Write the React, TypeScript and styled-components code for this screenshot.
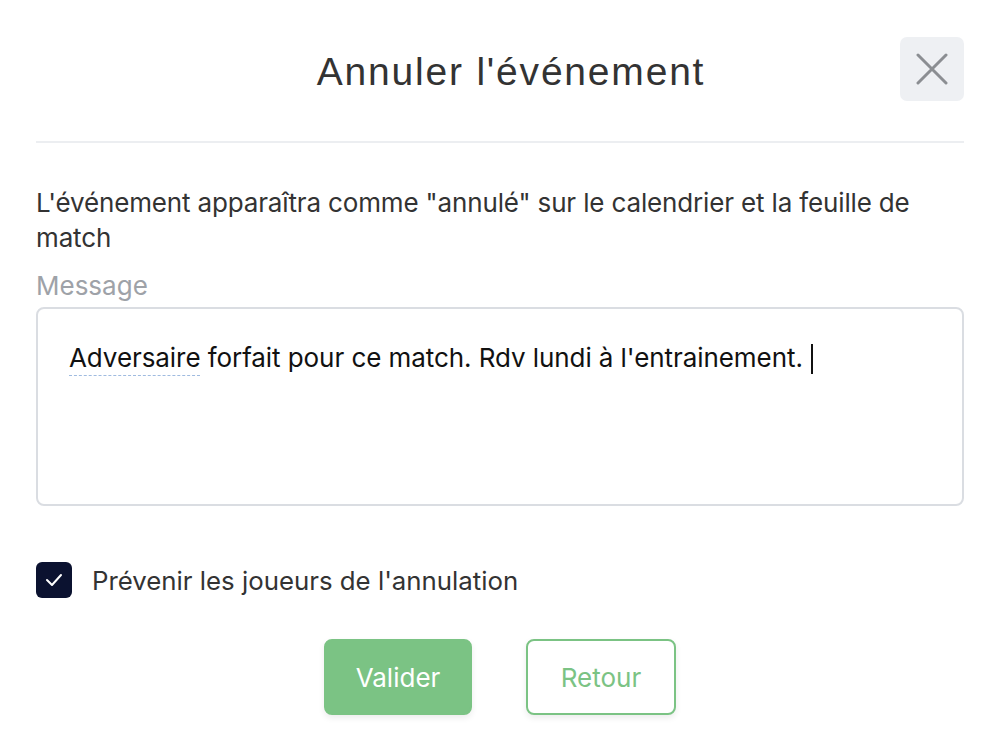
import React from 'react';
import styled, { createGlobalStyle } from 'styled-components';

const GlobalStyle = createGlobalStyle`
  html, body {
    margin: 0;
    padding: 0;
    background: #fff;
  }
  body {
    font-family: 'Inter', 'Liberation Sans', sans-serif;
  }
`;

const Modal = styled.div`
  width: 996px;
  height: 748px;
  box-sizing: border-box;
  padding: 37px 32px 0 36px;
  display: flex;
  flex-direction: column;
`;

const Header = styled.div`
  display: flex;
  align-items: center;
  justify-content: center;
  position: relative;
  height: 64px;
  padding-bottom: 40px;
  border-bottom: 2px solid #eceef1;
`;

const Title = styled.h1`
  margin: 6px 0 0 22px;
  font-family: 'Liberation Sans', Arial, sans-serif;
  font-weight: 400;
  font-size: 39px;
  color: #333;
  letter-spacing: 1.8px;
`;

const CloseButton = styled.button`
  position: absolute;
  right: 0;
  top: 0;
  width: 64px;
  height: 64px;
  border: none;
  border-radius: 7px;
  background: #eef0f3;
  display: flex;
  align-items: center;
  justify-content: center;
  padding: 0;
  cursor: pointer;
`;

const Body = styled.div`
  display: flex;
  flex-direction: column;
  padding-top: 42px;
`;

const Description = styled.p`
  margin: 0;
  font-size: 26px;
  letter-spacing: -0.15px;
  line-height: 35px;
  color: #333;
`;

const Label = styled.label`
  margin-top: 16px;
  font-size: 26px;
  line-height: 30px;
  color: #9ea2a8;
`;

const TextBox = styled.div`
  margin-top: 6px;
  height: 199px;
  box-sizing: border-box;
  border: 2px solid #dadde2;
  border-radius: 8px;
  padding: 32px 31px;
  font-size: 26px;
  letter-spacing: -0.07px;
  line-height: 34px;
  color: #111;
`;

const Spell = styled.span`
  text-decoration: underline dashed #9fbbe0;
  text-decoration-thickness: 1px;
  text-underline-offset: 8px;
`;

const Caret = styled.span`
  display: inline-block;
  width: 2px;
  height: 30px;
  background: #111;
  vertical-align: -7px;
  margin-left: 8px;
`;

const CheckRow = styled.div`
  margin-top: 56px;
  display: flex;
  align-items: center;
  gap: 20px;
`;

const CheckBox = styled.span`
  width: 36px;
  height: 36px;
  border-radius: 6px;
  background: #0b1230;
  display: flex;
  align-items: center;
  justify-content: center;
`;

const CheckLabel = styled.span`
  font-size: 25.8px;
  color: #333;
`;

const Actions = styled.div`
  margin-top: 41px;
  display: flex;
  justify-content: center;
  gap: 54px;
`;

const Button = styled.button<{ $outline?: boolean }>`
  height: 76px;
  width: ${p => (p.$outline ? '150px' : '148px')};
  border-radius: 8px;
  font-family: 'Inter', 'Liberation Sans', sans-serif;
  font-size: 26px;
  cursor: pointer;
  box-sizing: border-box;
  border: 2px solid #7bc384;
  background: ${p => (p.$outline ? '#fff' : '#7bc384')};
  color: ${p => (p.$outline ? '#7bc384' : '#fff')};
  box-shadow: 0 3px 6px rgba(0, 0, 0, 0.08);
`;

export default function App() {
  return (
    <>
      <GlobalStyle />
      <Modal>
        <Header>
          <Title>Annuler l'événement</Title>
          <CloseButton aria-label="Fermer">
            <svg width="32" height="32" viewBox="0 0 32 32">
              <path d="M2 2 L30 30 M30 2 L2 30" stroke="#8b8e92" strokeWidth="3" strokeLinecap="round" />
            </svg>
          </CloseButton>
        </Header>
        <Body>
          <Description>
            L'événement apparaîtra comme "annulé" sur le calendrier et la feuille de match
          </Description>
          <Label>Message</Label>
          <TextBox>
            <Spell>Adversaire</Spell> forfait pour ce match. Rdv lundi à l'entrainement.
            <Caret />
          </TextBox>
          <CheckRow>
            <CheckBox>
              <svg width="18" height="14" viewBox="0 0 18 14">
                <path d="M2 7 L7 12 L16 2" fill="none" stroke="#fff" strokeWidth="2" strokeLinecap="round" strokeLinejoin="round" />
              </svg>
            </CheckBox>
            <CheckLabel>Prévenir les joueurs de l'annulation</CheckLabel>
          </CheckRow>
          <Actions>
            <Button>Valider</Button>
            <Button $outline>Retour</Button>
          </Actions>
        </Body>
      </Modal>
    </>
  );
}
